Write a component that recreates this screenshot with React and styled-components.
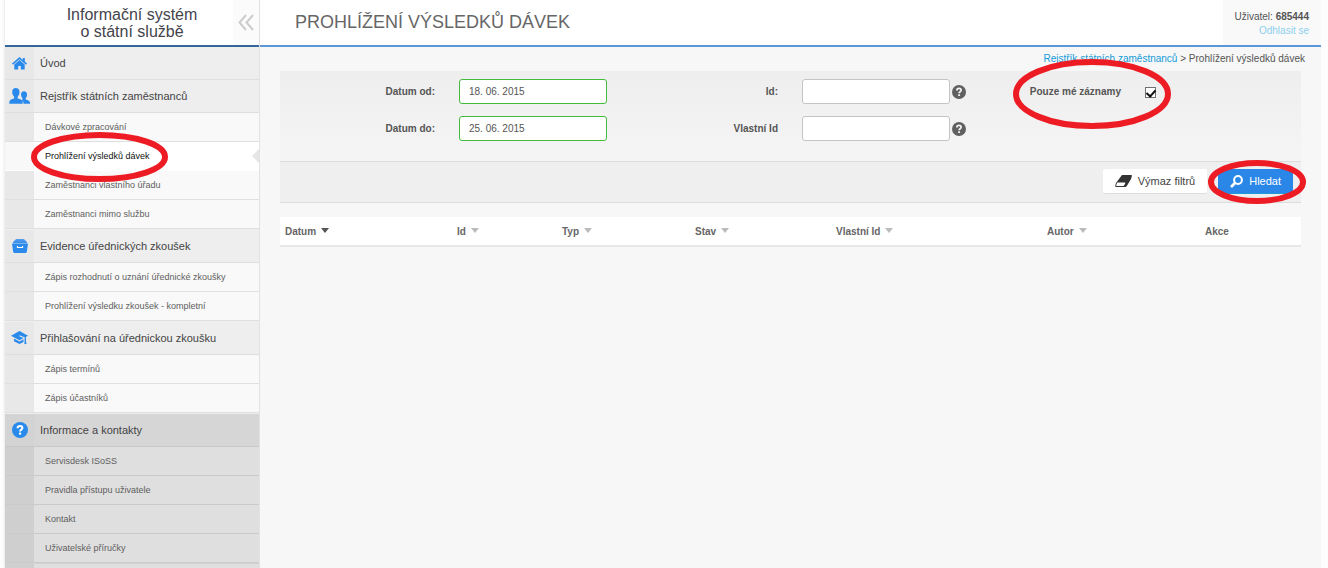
import React from "react";
import styled, { createGlobalStyle } from "styled-components";

const GlobalStyle = createGlobalStyle`
  * {
    box-sizing: border-box;
  }
  body {
    margin: 0;
    background: #fdfdfd;
    font-family: "Liberation Sans", Arial, sans-serif;
    font-size: 10px;
    color: #555;
  }
  a {
    color: inherit;
    text-decoration: none;
  }
`;

const Page = styled.div`
  display: flex;
  min-height: 100vh;
  padding: 0 7px 0 5px;
`;

/* sidebar */

const Sidebar = styled.aside`
  display: flex;
  flex-direction: column;
  flex: 0 0 255px;
  border-right: 1px solid #e2e2e2;
  box-shadow: 0 0 3px rgba(0, 0, 0, 0.15);
`;

const Brand = styled.div`
  display: grid;
  grid-template-columns: 26px 1fr 26px;
  height: 47px;
  background: #fff;
  border-bottom: 2px solid #336699;
`;

const BrandName = styled.strong`
  align-self: center;
  font-size: 16px;
  font-weight: 400;
  line-height: 17px;
  text-align: center;
  color: #44444c;
`;

const CollapseButton = styled.button`
  display: flex;
  align-items: center;
  justify-content: center;
  padding: 0;
  border: 0;
  background: #fbfbfb;
  color: #ccc;
`;

const Nav = styled.nav`
  display: flex;
  flex-direction: column;
  flex: 1;
`;

const Heading = styled.a`
  display: grid;
  grid-template-columns: 29px 1fr;
  height: 33px;
  line-height: 32px;
  font-size: 11px;
  color: #444;
  background: ${(p) => (p.$dark ? "#d6d6d6" : "#eee")};
  border-bottom: 1px solid ${(p) => (p.$dark ? "#c8c8c8" : "#dedede")};
`;

const HeadingIcon = styled.span`
  display: flex;
  align-items: center;
  justify-content: center;
  color: #2a8aec;
  background: ${(p) => (p.$dark ? "#d3d3d3" : "#e8e8e8")};
`;

const HeadingText = styled.span`
  padding-left: 6px;
  white-space: nowrap;
`;

const SubList = styled.ul`
  margin: 0;
  padding: 0 0 1px;
  list-style: none;
  background: ${(p) => (p.$dark ? "#d3d3d3" : "#eee")};
`;

const railColor = (p) => (p.$active ? "#f8f8f8" : p.$dark ? "#cfcfcf" : "#e8e8e8");
const itemColor = (p) => (p.$active ? "#fff" : p.$dark ? "#dfdfdf" : "#f9f9f9");
const lineColor = (p) => (p.$active ? "#fff" : p.$dark ? "#cacaca" : "#e0e0e0");

const SubItem = styled.li`
  position: relative;
  height: 29px;
  padding-left: 29px;
  background: linear-gradient(to right, ${railColor} 29px, ${itemColor} 29px);
  border-bottom: 1px solid ${lineColor};
`;

const SubLink = styled.a`
  display: block;
  padding-left: 11px;
  line-height: 28px;
  font-size: 9px;
  white-space: nowrap;
  color: ${(p) => (p.$active ? "#111" : "#606060")};
`;

const ActiveArrow = styled.span`
  position: absolute;
  right: 0;
  top: 7px;
  border: 7px solid transparent;
  border-left-width: 0;
  border-right-color: #e6e6e6;
`;

const NavRest = styled.div`
  flex: 1;
  border-left: 29px solid #cfcfcf;
  background: #dfdfdf;
`;

/* main area */

const Main = styled.main`
  flex: 1;
  min-width: 0;
  background: #f7f7f7;
`;

const Header = styled.header`
  display: flex;
  justify-content: space-between;
  height: 47px;
  padding-left: 35px;
  background: #fff;
  border-bottom: 2px solid #5a96d8;
`;

const Title = styled.h1`
  margin: 0;
  font-size: 18px;
  font-weight: 400;
  line-height: 45px;
  color: #666;
`;

const UserBox = styled.div`
  padding: 10px 12px 0;
  background: #f9f9f9;
  line-height: 14px;
  text-align: right;
`;

const LogoutLink = styled.a`
  display: block;
  color: #8cd0ee;
`;

const Content = styled.div`
  padding: 0 20px;
`;

const Breadcrumbs = styled.nav`
  height: 24px;
  margin-right: -4px;
  line-height: 23px;
  text-align: right;
`;

const BreadcrumbLink = styled.a`
  color: #149bd8;
`;

const Filters = styled.div`
  display: grid;
  grid-template-columns: repeat(3, minmax(0, 1fr));
  grid-auto-rows: 25px;
  gap: 12px 8px;
  padding: 8px 0 20px;
  background: linear-gradient(#eee, #f5f5f5);
  border-bottom: 1px solid #dcdcdc;
`;

const Field = styled.div`
  position: relative;
  display: flex;
  align-items: center;
`;

const Label = styled.label`
  flex: 0 0 155px;
  margin-right: 24px;
  font-weight: 700;
  text-align: right;
`;

const TextInput = styled.input`
  flex: 0 0 148px;
  width: 148px;
  height: 25px;
  padding: 0 9px;
  border: 1px solid ${(p) => (p.$valid ? "#44bb3c" : "#c4c4c4")};
  border-radius: 3px;
  background: #fff;
  font: inherit;
  color: #555;
`;

const HelpButton = styled.button`
  display: flex;
  margin-left: 2px;
  padding: 0;
  border: 0;
  background: none;
  color: #606060;
`;

const Checkbox = styled.input`
  appearance: none;
  display: flex;
  justify-content: center;
  width: 11px;
  height: 11px;
  margin: 2px 0 0;
  border: 1px solid #707070;
  background: #fff;

  &:checked::before {
    content: "";
    width: 4px;
    height: 7px;
    border: solid #111;
    border-width: 0 2px 2px 0;
    transform: rotate(42deg);
  }
`;

const Actions = styled.div`
  display: flex;
  justify-content: flex-end;
  gap: 11px;
  height: 41px;
  padding: 7px 8px 0 0;
  background: #efefef;
  border-bottom: 1px solid #dcdcdc;
`;

const ActionWrap = styled.div`
  position: relative;
`;

const Button = styled.button`
  display: flex;
  align-items: center;
  gap: 6px;
  height: 25px;
  padding: 0 12px;
  border: 0;
  border-bottom: 1px solid ${(p) => (p.$primary ? "#1f9ad6" : "#ddd")};
  border-radius: 2px;
  background: ${(p) => (p.$primary ? "#2a87e8" : "#fff")};
  color: ${(p) => (p.$primary ? "#fff" : "#444")};
  font-family: inherit;
  font-size: 11px;
`;

const Results = styled.table`
  width: 100%;
  margin-top: 14px;
  table-layout: fixed;
  border-collapse: collapse;
  background: #fff;
  border-bottom: 2px solid #e8e8e8;
`;

const Col = styled.col`
  width: ${(p) => p.$width}px;
`;

const Th = styled.th`
  height: 29px;
  padding: 0 5px;
  text-align: left;
  white-space: nowrap;
  color: #666;
`;

const SortArrow = styled.span`
  display: inline-block;
  margin: 0 0 2px 5px;
  border: solid transparent;
  border-width: 5px 4px 0;
  border-top-color: ${(p) => (p.$active ? "#555" : "#bbb")};
`;

/* red marks over the controls being explained */

const Mark = styled.svg`
  position: absolute;
  left: ${(p) => p.$left}px;
  top: ${(p) => p.$top}px;
  pointer-events: none;
  z-index: 1;
`;

function Highlight({ width, height, left, top }) {
  return (
    <Mark width={width} height={height} $left={left} $top={top} aria-hidden="true">
      <ellipse
        cx={width / 2}
        cy={height / 2}
        rx={width / 2 - 3}
        ry={height / 2 - 3}
        fill="none"
        stroke="#ed1c24"
        strokeWidth="6"
      />
    </Mark>
  );
}

const HomeIcon = () => (
  <svg width="15" height="13" viewBox="0 0 15 13" fill="currentColor">
    <path d="M7.5 0 0 6.6l1 1.200L7.500 2.200l6.500 5.600 1-1.200-2.200-2V1h-2v1.900z" />
    <path d="M7.5 3 2.300 7.500V12.500h3.900V9h2.600v3.500h3.900V7.500z" />
  </svg>
);

const PeopleIcon = () => (
  <svg width="21" height="16" viewBox="0 0 21 16" fill="currentColor">
    <path d="M6.8 0C4.500 0 3.200 1.600 3.200 4c0 1.900.8 3.700 1.900 4.700v1.800C2.500 11.200.3 12.300.3 14v1.700h13.400V14c0-1.700-2.400-2.800-5-3.500V8.700c1.100-1 1.800-2.800 1.800-4.700C10.500 1.600 9.100 0 6.800 0z" />
    <path d="M15 3.200c-1.900 0-3 1.300-3 3.300 0 1.500.6 2.800 1.500 3.600v1.300c-.5.100-.9.300-1.300.5 1.500.8 2.300 1.800 2.300 3.100v.7H21v-1.100c0-1.500-1.700-2.600-4.300-3.200v-1.300c.9-.8 1.400-2.100 1.400-3.600 0-2-1.200-3.300-3.100-3.300z" />
  </svg>
);

const CaseIcon = () => (
  <svg width="16" height="14" viewBox="0 0 16 14" fill="currentColor">
    <path d="M4 0h8l1.500 2h-11z" opacity=".8" />
    <path d="M2 1.800h12L15.500 4.500H.5z" opacity=".9" />
    <path d="M0 4.800h16L14.800 12.800Q14.600 14 13.500 14h-11Q1.400 14 1.200 12.800z" />
    <path d="M5.500 7v1.500h5V7" fill="none" stroke="#fff" strokeWidth="1.200" />
  </svg>
);

const CapIcon = () => (
  <svg width="17" height="14" viewBox="0 0 17 14" fill="currentColor">
    <path d="M8.500 0 0 4.800 8.500 9.200 12.600 7 8.200 5.200l.4-.9L14 6.400l3-1.600z" />
    <path d="M3 7.400v2.800L8.500 13l4-2V8.200l-4 2.200z" />
    <path d="M13.600 6.700 15 6v5l.8 1.500-2.600.8.400-2.200z" />
  </svg>
);

const QuestionIcon = ({ size, hole }) => (
  <svg width={size} height={size} viewBox="0 0 16 16">
    <circle cx="8" cy="8" r="8" fill="currentColor" />
    <path
      d="M5.600 6.200C5.600 4.600 6.600 3.900 8 3.900s2.400.8 2.400 2.100c0 1.700-2.300 1.600-2.300 3.500"
      fill="none"
      stroke={hole}
      strokeWidth="2"
    />
    <rect x="7" y="10.600" width="2.200" height="2" fill={hole} />
  </svg>
);

const CollapseIcon = () => (
  <svg width="16" height="17" viewBox="0 0 16 17" fill="none" stroke="currentColor" strokeWidth="2">
    <path d="M8 1 1.500 8.500 8 16M15 1 8.500 8.500 15 16" />
  </svg>
);

const EraserIcon = () => (
  <svg width="17" height="12" viewBox="0 0 17 12">
    <path d="M7 0h9.200q1 0 .6 1.200L16 4l-4.200 7q-.6 1-1.600 1H1.200Q0 12 .3 10.600L1 8z" fill="#333" />
    <path d="M2.200 7.600h7.600q.8 0 .4.800l-1 1.900q-.3.600-1 .6H1.700q-.7 0-.5-.7z" fill="#fff" />
  </svg>
);

const SearchIcon = () => (
  <svg width="13" height="13" viewBox="0 0 13 13" fill="none" stroke="currentColor">
    <circle cx="8" cy="5" r="3.900" strokeWidth="2" />
    <path d="M5 8 1 12" strokeWidth="2.600" />
  </svg>
);

const menu = [
  { title: "Úvod", icon: <HomeIcon />, items: [] },
  {
    title: "Rejstřík státních zaměstnanců",
    icon: <PeopleIcon />,
    items: [
      "Dávkové zpracování",
      "Prohlížení výsledků dávek",
      "Zaměstnanci vlastního úřadu",
      "Zaměstnanci mimo službu",
    ],
  },
  {
    title: "Evidence úřednických zkoušek",
    icon: <CaseIcon />,
    items: [
      "Zápis rozhodnutí o uznání úřednické zkoušky",
      "Prohlížení výsledku zkoušek - kompletní",
    ],
  },
  {
    title: "Přihlašování na úřednickou zkoušku",
    icon: <CapIcon />,
    items: ["Zápis termínů", "Zápis účastníků"],
  },
  {
    title: "Informace a kontakty",
    icon: <QuestionIcon size={16} hole="#fff" />,
    dark: true,
    items: [
      "Servisdesk ISoSS",
      "Pravidla přístupu uživatele",
      "Kontakt",
      "Uživatelské příručky",
    ],
  },
];

const activeItem = "Prohlížení výsledků dávek";

const columns = [
  { name: "Datum", width: 172, sort: "active" },
  { name: "Id", width: 105, sort: "idle" },
  { name: "Typ", width: 133, sort: "idle" },
  { name: "Stav", width: 141, sort: "idle" },
  { name: "Vlastní Id", width: 211, sort: "idle" },
  { name: "Autor", width: 158, sort: "idle" },
  { name: "Akce", width: 101 },
];

function MenuGroup({ group }) {
  const { title, icon, items, dark } = group;
  return (
    <>
      <Heading href="#" $dark={dark}>
        <HeadingIcon $dark={dark}>{icon}</HeadingIcon>
        <HeadingText>{title}</HeadingText>
      </Heading>
      {items.length > 0 && (
        <SubList $dark={dark}>
          {items.map((item) => {
            const active = item === activeItem;
            return (
              <SubItem key={item} $dark={dark} $active={active}>
                <SubLink href="#" $active={active}>
                  {item}
                </SubLink>
                {active && <ActiveArrow />}
                {active && <Highlight width={137} height={50} left={26} top={-10} />}
              </SubItem>
            );
          })}
        </SubList>
      )}
    </>
  );
}

function Help() {
  return (
    <HelpButton type="button" aria-label="Nápověda">
      <QuestionIcon size={14} hole="#f2f2f2" />
    </HelpButton>
  );
}

export default function App() {
  return (
    <Page>
      <GlobalStyle />
      <Sidebar>
        <Brand>
          <span />
          <BrandName>
            Informační systém
            <br />o státní službě
          </BrandName>
          <CollapseButton type="button" aria-label="Sbalit menu">
            <CollapseIcon />
          </CollapseButton>
        </Brand>
        <Nav>
          {menu.map((group) => (
            <MenuGroup key={group.title} group={group} />
          ))}
          <NavRest />
        </Nav>
      </Sidebar>
      <Main>
        <Header>
          <Title>PROHLÍŽENÍ VÝSLEDKŮ DÁVEK</Title>
          <UserBox>
            Uživatel: <b>685444</b>
            <LogoutLink href="#">Odhlasit se</LogoutLink>
          </UserBox>
        </Header>
        <Content>
          <Breadcrumbs>
            <BreadcrumbLink href="#">Rejstřík státních zaměstnanců</BreadcrumbLink> &gt;
            Prohlížení výsledků dávek
          </Breadcrumbs>
          <form onSubmit={(e) => e.preventDefault()}>
            <Filters>
              <Field>
                <Label htmlFor="from">Datum od:</Label>
                <TextInput id="from" $valid defaultValue="18. 06. 2015" />
              </Field>
              <Field>
                <Label htmlFor="id">Id:</Label>
                <TextInput id="id" />
                <Help />
              </Field>
              <Field>
                <Label htmlFor="mine">Pouze mé záznamy</Label>
                <Checkbox id="mine" type="checkbox" defaultChecked />
                <Highlight width={158} height={70} left={47} top={-20} />
              </Field>
              <Field>
                <Label htmlFor="to">Datum do:</Label>
                <TextInput id="to" $valid defaultValue="25. 06. 2015" />
              </Field>
              <Field>
                <Label htmlFor="ownId">Vlastní Id</Label>
                <TextInput id="ownId" />
                <Help />
              </Field>
            </Filters>
            <Actions>
              <Button type="reset">
                <EraserIcon />
                Výmaz filtrů
              </Button>
              <ActionWrap>
                <Button type="submit" $primary>
                  <SearchIcon />
                  Hledat
                </Button>
                <Highlight width={98} height={44} left={-10} top={-9} />
              </ActionWrap>
            </Actions>
          </form>
          <Results>
            <colgroup>
              {columns.map((c) => (
                <Col key={c.name} $width={c.width} />
              ))}
            </colgroup>
            <thead>
              <tr>
                {columns.map((c) => (
                  <Th key={c.name} scope="col">
                    {c.name}
                    {c.sort && <SortArrow $active={c.sort === "active"} />}
                  </Th>
                ))}
              </tr>
            </thead>
          </Results>
        </Content>
      </Main>
    </Page>
  );
}
